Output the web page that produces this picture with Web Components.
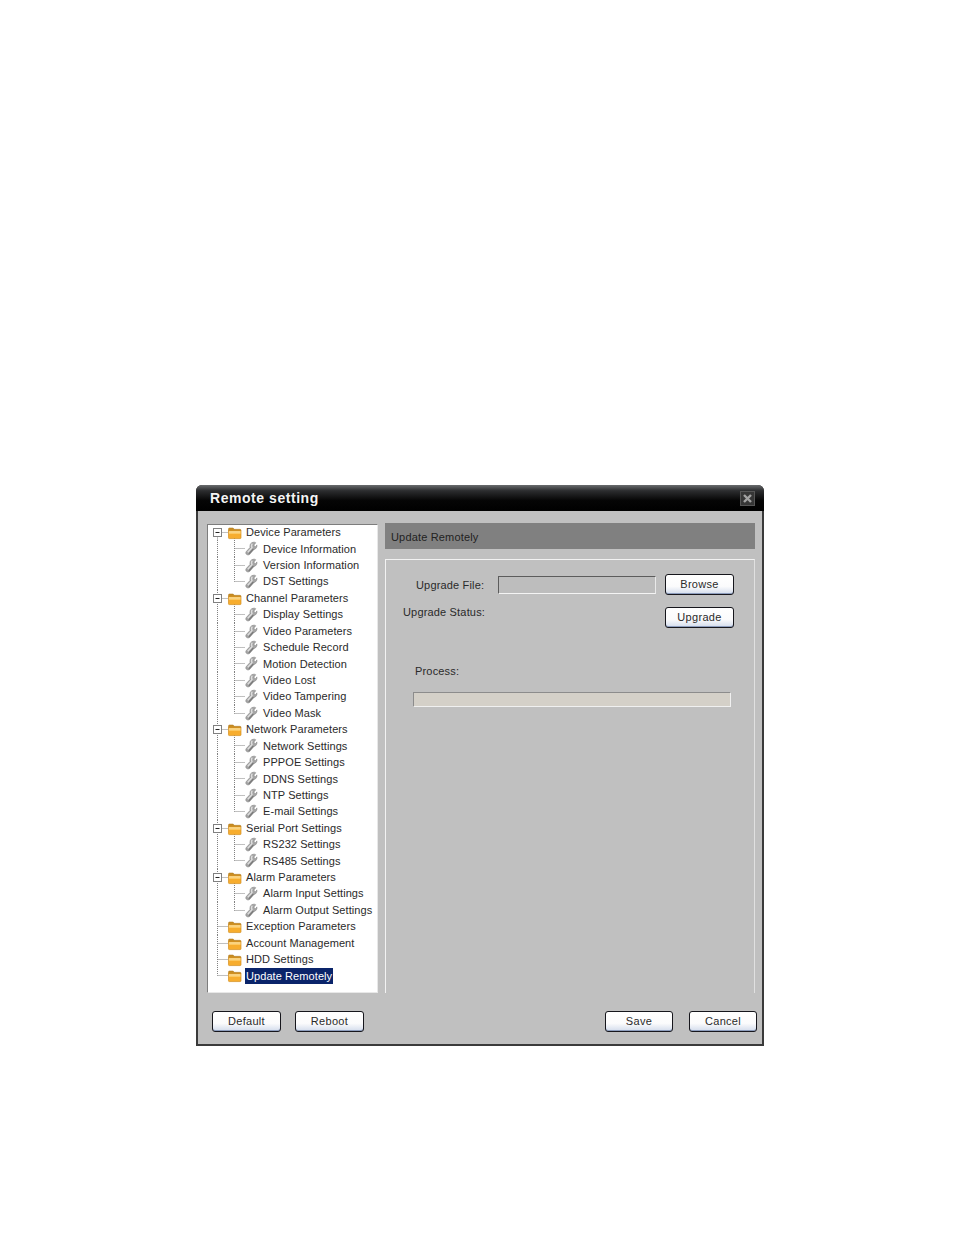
<!DOCTYPE html>
<html>
<head>
<meta charset="utf-8">
<title>Remote setting</title>
<style>
  html, body { margin: 0; background: #fff; }
  body { padding: 485px 0 0 196px; height: 750px; font: 11px "Liberation Sans", Arial, sans-serif; color: #222; }
</style>
</head>
<body>
<remote-dialog heading="Remote setting">
  <tree-view slot="tree">
    <tree-row kind="group" open first>Device Parameters</tree-row>
    <tree-row kind="leaf" more>Device Information</tree-row>
    <tree-row kind="leaf" more>Version Information</tree-row>
    <tree-row kind="leaf">DST Settings</tree-row>
    <tree-row kind="group" open>Channel Parameters</tree-row>
    <tree-row kind="leaf" more>Display Settings</tree-row>
    <tree-row kind="leaf" more>Video Parameters</tree-row>
    <tree-row kind="leaf" more>Schedule Record</tree-row>
    <tree-row kind="leaf" more>Motion Detection</tree-row>
    <tree-row kind="leaf" more>Video Lost</tree-row>
    <tree-row kind="leaf" more>Video Tampering</tree-row>
    <tree-row kind="leaf">Video Mask</tree-row>
    <tree-row kind="group" open>Network Parameters</tree-row>
    <tree-row kind="leaf" more>Network Settings</tree-row>
    <tree-row kind="leaf" more>PPPOE Settings</tree-row>
    <tree-row kind="leaf" more>DDNS Settings</tree-row>
    <tree-row kind="leaf" more>NTP Settings</tree-row>
    <tree-row kind="leaf">E-mail Settings</tree-row>
    <tree-row kind="group" open>Serial Port Settings</tree-row>
    <tree-row kind="leaf" more>RS232 Settings</tree-row>
    <tree-row kind="leaf">RS485 Settings</tree-row>
    <tree-row kind="group" open>Alarm Parameters</tree-row>
    <tree-row kind="leaf" more>Alarm Input Settings</tree-row>
    <tree-row kind="leaf">Alarm Output Settings</tree-row>
    <tree-row kind="group">Exception Parameters</tree-row>
    <tree-row kind="group">Account Management</tree-row>
    <tree-row kind="group">HDD Settings</tree-row>
    <tree-row kind="group" end selected>Update Remotely</tree-row>
  </tree-view>
  <update-panel slot="main" heading="Update Remotely"></update-panel>
  <skin-button slot="left">Default</skin-button>
  <skin-button slot="left">Reboot</skin-button>
  <skin-button slot="right" narrow>Save</skin-button>
  <skin-button slot="right" narrow>Cancel</skin-button>
</remote-dialog>

<script>
const FOLDER = `
  <path d="M20.500 7V5q0-1 1-1h3.500l1.500 1.300h5.500q1 0 1 1V7z" fill="#c98d22" stroke="#a9761c" stroke-width=".5"/>
  <path d="M20.500 6.800h12.500v7q0 .8-.8.8H21.300q-.8 0-.8-.8z" fill="#f7ad2e" stroke="#d28e1e" stroke-width=".7"/>
  <path d="M21 7.300h11.500v1.400H21z" fill="#fde4a4"/>
  <path d="M21 9h11.500v1H21z" fill="#fcc860"/>`;

const WRENCH = `
  <g transform="translate(37 2)">
    <path d="M6.800.7C8.800-.2 10.400.2 10.800.8L9 2.900l.4 1.500 1.500.3 1-1.800c.5 2-.8 4.300-3.200 4.800L4.800 12.300c-1 1.100-3.300.8-3.900-.8-.3-.9 0-1.600.6-2.200l3.500-3.800C4.700 3.300 5.400 1.400 6.800.7z" fill="#a6a6a6" stroke="#777" stroke-width=".5" stroke-linejoin="round"/>
    <path d="M7.200 1.700C6.300 3 6.400 4.500 7 5.700L2.800 10.200" fill="none" stroke="#dedede" stroke-width="1.400"/>
    <path d="M8.400 7 3.800 11.800" fill="none" stroke="#767676" stroke-width="1.100"/>
  </g>`;

class TreeRow extends HTMLElement {
  constructor () {
    super();
    const group = this.getAttribute('kind') === 'group';
    const open = this.hasAttribute('open');
    const end = this.hasAttribute('end');
    const first = this.hasAttribute('first');
    const more = this.hasAttribute('more');
    const dots = 'stroke="#808080" stroke-dasharray="1 1" stroke-width="1" fill="none"';
    let art = '';
    if (group) {
      art += `<path d="M9.500 ${first ? 8.500 : 0}V${end ? 8.500 : 17}M9.500 8.500H20" ${dots}/>`;
      if (open) {
        art += `<rect x="5.500" y="4.500" width="8" height="8" fill="#fff" stroke="#808080"/>
                <path d="M7.500 8.500h4" stroke="#222"/>`;
        art += `<path d="M26.500 14V17" ${dots}/>`;
      }
      art += FOLDER;
    } else {
      art += `<path d="M9.500 0V17" ${dots}/>`;
      art += `<path d="M26.500 0V${more ? 17 : 8.500}M26.500 8.500H37" ${dots}/>`;
      art += WRENCH;
    }
    this.attachShadow({ mode: 'open' }).innerHTML = `
      <style>
        :host { display: flex; align-items: center; height: 16.430px; white-space: nowrap; letter-spacing: .08px; color: #2a2a2a; }
        svg { flex: none; overflow: visible; width: ${group ? 37 : 54}px; height: 16.430px; }
        span { padding: 0 1px; line-height: 16px; }
        :host([selected]) span { background: #0a246a; color: #fff; }
      </style>
      <svg viewBox="0 0 ${group ? 37 : 54} 16.430">${art}</svg>
      <span><slot></slot></span>`;
  }
}
customElements.define('tree-row', TreeRow);

class TreeView extends HTMLElement {
  constructor () {
    super();
    this.attachShadow({ mode: 'open' }).innerHTML = `
      <style>
        :host { display: block; box-sizing: border-box; width: 171px; height: 469px; margin-top: 1px; background: #fff;
                border: 1px solid #7d7d7d; border-right-color: #e8e8e8; border-bottom-color: #e8e8e8; }
        div { margin-top: -1px; }
      </style>
      <div><slot></slot></div>`;
  }
}
customElements.define('tree-view', TreeView);

class SkinButton extends HTMLElement {
  constructor () {
    super();
    this.attachShadow({ mode: 'open' }).innerHTML = `
      <style>
        :host { display: inline-flex; align-items: center; justify-content: center; box-sizing: border-box;
                width: 69px; height: 21px; padding-bottom: 1px; border: 1px solid #16161c; border-radius: 3px;
                background: linear-gradient(#ffffff 0, #fbfbfc 60%, #d3dcec 100%);
                box-shadow: inset 0 -1px 0 #8d9dbd; color: #2a2a2a; letter-spacing: .3px; }
        :host([narrow]) { width: 68px; }
      </style>
      <slot></slot>`;
  }
}
customElements.define('skin-button', SkinButton);

class UpdatePanel extends HTMLElement {
  constructor () {
    super();
    this.attachShadow({ mode: 'open' }).innerHTML = `
      <style>
        :host { display: flex; flex-direction: column; width: 370px; height: 470px; letter-spacing: .17px; color: #2a2a2a; }
        header { height: 26px; margin-bottom: 10px; padding-left: 6px; line-height: 28px; background: #808080; color: #222; }
        .body { flex: 1; box-sizing: border-box; padding: 14px 20px 0 0; border: 1px solid #f2f2f2; border-bottom: 0; border-right-color: #e0e0e0; }
        .row { display: flex; height: 21px; }
        .row1 { align-items: center; padding-left: 30px; }
        .row1 label { width: 82px; }
        .file { box-sizing: border-box; width: 158px; height: 18px; margin-right: 9px; border: 1px solid; border-color: #5c5c5c #e9e9e9 #f4f4f4 #5c5c5c; background: #bdbdbd; }
        .row2 { margin-top: 12px; justify-content: space-between; padding-left: 17px; }
        .row2 span { margin-top: -5px; line-height: 20px; }
        .row1 skin-button, .row2 skin-button { flex: none; }
        .process { margin: 33px 0 11px 29px; line-height: 20px; }
        .bar { box-sizing: border-box; width: 318px; height: 15px; margin-left: 27px; background: #d4d0c8; border: 1px solid; border-color: #8c8c8c #f0f0f0 #f0f0f0 #8c8c8c; }
      </style>
      <header>${this.getAttribute('heading')}</header>
      <div class="body">
        <div class="row row1">
          <label>Upgrade File:</label>
          <div class="file"></div>
          <skin-button>Browse</skin-button>
        </div>
        <div class="row row2">
          <span>Upgrade Status:</span>
          <skin-button>Upgrade</skin-button>
        </div>
        <div class="process">Process:</div>
        <div class="bar"></div>
      </div>`;
  }
}
customElements.define('update-panel', UpdatePanel);

class RemoteDialog extends HTMLElement {
  constructor () {
    super();
    this.attachShadow({ mode: 'open' }).innerHTML = `
      <style>
        :host { display: flex; flex-direction: column; box-sizing: border-box; width: 568px; height: 561px;
                border-radius: 6px 6px 0 0; overflow: hidden; background: #c0c0c0; box-shadow: inset 0 0 0 2px #3a3a3a; }
        .title { display: flex; align-items: center; justify-content: space-between; flex: none; height: 26px; padding: 0 9px 0 14px;
                 background: linear-gradient(#6a6c6e 0, #2c2d2f 22%, #050505 60%, #000 100%); }
        h1 { margin: 0; font: bold 14px "Liberation Sans", Arial, sans-serif; color: #f4f4f4; letter-spacing: .55px; }
        .close { display: flex; box-sizing: border-box; width: 15px; height: 15px; background: #363636; border: 1px solid #565656; }
        .content { display: flex; gap: 7px; flex: none; padding: 12px 9px 0 11px; }
        footer { display: flex; justify-content: space-between; padding: 18px 7px 0 16px; }
        .group { display: flex; gap: 14px; }
        .group.right { gap: 16px; }
      </style>
      <div class="title">
        <h1>${this.getAttribute('heading')}</h1>
        <div class="close"><svg width="13" height="13" viewBox="0 0 13 13"><path d="M3 3l7 7M10 3l-7 7" stroke="#a2a2a2" stroke-width="2.400"/></svg></div>
      </div>
      <div class="content">
        <slot name="tree"></slot>
        <slot name="main"></slot>
      </div>
      <footer>
        <div class="group"><slot name="left"></slot></div>
        <div class="group right"><slot name="right"></slot></div>
      </footer>`;
  }
}
customElements.define('remote-dialog', RemoteDialog);
</script>
</body>
</html>
